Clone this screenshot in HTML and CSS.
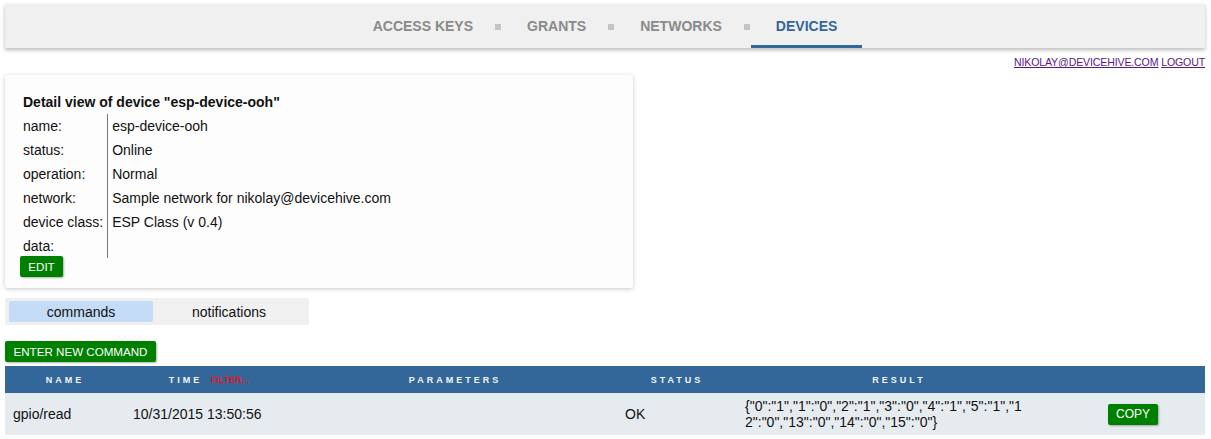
FILE: index.html
```html
<!DOCTYPE html>
<html>
<head>
<meta charset="utf-8">
<title>DeviceHive Admin</title>
<link rel="stylesheet" href="styles.css">
</head>
<body>
<div class="page">
  <nav class="topnav">
    <a class="nav-item">ACCESS KEYS</a>
    <span class="nav-sep"></span>
    <a class="nav-item">GRANTS</a>
    <span class="nav-sep"></span>
    <a class="nav-item">NETWORKS</a>
    <span class="nav-sep"></span>
    <a class="nav-item active">DEVICES</a>
  </nav>
  <div class="userline">
    <a class="userlink" href="#">NIKOLAY@DEVICEHIVE.COM</a> <a class="userlink" href="#">LOGOUT</a>
  </div>

  <section class="card">
    <div class="card-title">Detail view of device "esp-device-ooh"</div>
    <table class="props">
      <tr><td class="pk">name:</td><td class="pv">esp-device-ooh</td></tr>
      <tr><td class="pk">status:</td><td class="pv">Online</td></tr>
      <tr><td class="pk">operation:</td><td class="pv">Normal</td></tr>
      <tr><td class="pk">network:</td><td class="pv">Sample network for nikolay@devicehive.com</td></tr>
      <tr><td class="pk">device class:</td><td class="pv">ESP Class (v 0.4)</td></tr>
      <tr><td class="pk">data:</td><td class="pv"></td></tr>
    </table>
    <button class="btn btn-edit">EDIT</button>
  </section>

  <div class="tabs">
    <div class="tab tab-active">commands</div>
    <div class="tab tab-second">notifications</div>
  </div>

  <button class="btn btn-enter">ENTER NEW COMMAND</button>

  <table class="grid">
    <colgroup>
      <col class="c-name"><col class="c-time"><col class="c-params"><col class="c-status"><col class="c-result"><col class="c-action">
    </colgroup>
    <thead>
      <tr>
        <th>NAME</th>
        <th>TIME <span class="filter">FILTER...</span></th>
        <th>PARAMETERS</th>
        <th>STATUS</th>
        <th>RESULT</th>
        <th></th>
      </tr>
    </thead>
    <tbody>
      <tr>
        <td>gpio/read</td>
        <td>10/31/2015 13:50:56</td>
        <td></td>
        <td>OK</td>
        <td><div class="result">{"0":"1","1":"0","2":"1","3":"0","4":"1","5":"1","12":"0","13":"0","14":"0","15":"0"}</div></td>
        <td class="act"><button class="btn btn-copy">COPY</button></td>
      </tr>
    </tbody>
  </table>
</div>
</body>
</html>
```

FILE: styles.css
```css
* { box-sizing: border-box; }
html, body { margin: 0; padding: 0; background: #fff; }
body {
  font-family: "Liberation Sans", Arial, sans-serif;
  font-size: 14px;
  color: #111;
}
.page { padding: 4px 6px 0 5px; }

.topnav {
  height: 44px;
  background: #f0f0f0;
  box-shadow: 0 2px 4px rgba(0,0,0,0.28);
  display: flex;
  justify-content: center;
  align-items: stretch;
}
.nav-item {
  display: flex;
  align-items: center;
  padding: 3px 25px 0;
  font-weight: bold;
  font-size: 14px;
  color: #8a8a8a;
  border-bottom: 3px solid transparent;
}
.nav-item.active { color: #336699; border-bottom-color: #336699; }
.nav-sep {
  align-self: center;
  width: 6px;
  height: 6px;
  margin: 2px 1px 0 -3px;
  background: #c4c4c4;
}

.userline {
  text-align: right;
  padding-top: 8px;
  height: 27px;
  font-size: 10.6px;
  letter-spacing: -0.15px;
}
.userlink { color: #551a8b; text-decoration: underline; }

.card {
  width: 628px;
  background: #fdfdfd;
  border-radius: 3px;
  box-shadow: 0 1px 4px rgba(0,0,0,0.22);
  padding: 17px 18px 11px;
}
.card-title { font-weight: bold; line-height: 20px; margin-bottom: 2px; }
.props { border-collapse: collapse; }
.props td { height: 24px; padding: 0; vertical-align: middle; }
.props .pk { padding-right: 4px; border-right: 1px solid #777; white-space: nowrap; }
.props .pv { padding-left: 4px; }

.btn {
  font-family: "Liberation Sans", Arial, sans-serif;
  background: #008000;
  color: #fff;
  border: none;
  border-radius: 2px;
  height: 21px;
  padding: 0 8px;
  font-size: 11.6px;
  box-shadow: 1px 1px 2px rgba(0,0,0,0.3);
  display: block;
}
.btn-edit { margin: -2px 0 0 -3px; width: 43px; padding: 0; }

.tabs {
  margin-top: 10px;
  width: 304px;
  height: 27px;
  background: #f0f0f0;
  border-radius: 2px;
  padding: 3px 4px;
  display: flex;
}
.tab { display: flex; align-items: center; justify-content: center; }
.tab-active { width: 144px; background: #c4dcf6; border-radius: 2px; }
.tab-second { width: 152px; }

.btn-enter { margin-top: 16px; width: 151px; padding: 0; }

.grid {
  margin-top: 4px;
  width: 1200px;
  border-collapse: collapse;
  table-layout: fixed;
}
.c-name { width: 120px; }
.c-time { width: 168px; }
.c-params { width: 324px; }
.c-status { width: 120px; }
.c-result { width: 324px; }
.c-action { width: 144px; }
.grid thead tr { background: #336699; }
.grid th {
  height: 27px;
  padding: 0;
  color: #f4f6fa;
  font-size: 9px;
  font-weight: bold;
  letter-spacing: 3px;
  text-align: center;
}
.filter {
  color: #f01020;
  font-size: 9px;
  letter-spacing: 0;
  margin-left: 3px;
}
.grid tbody tr { background: #e6ebf0; }
.grid td { height: 42px; padding: 0 8px; vertical-align: middle; }
.result { width: 280px; word-break: break-all; line-height: 16px; }
.act { text-align: center; }
.btn-copy { display: inline-block; width: 50px; padding: 0; font-size: 12px; }
```
